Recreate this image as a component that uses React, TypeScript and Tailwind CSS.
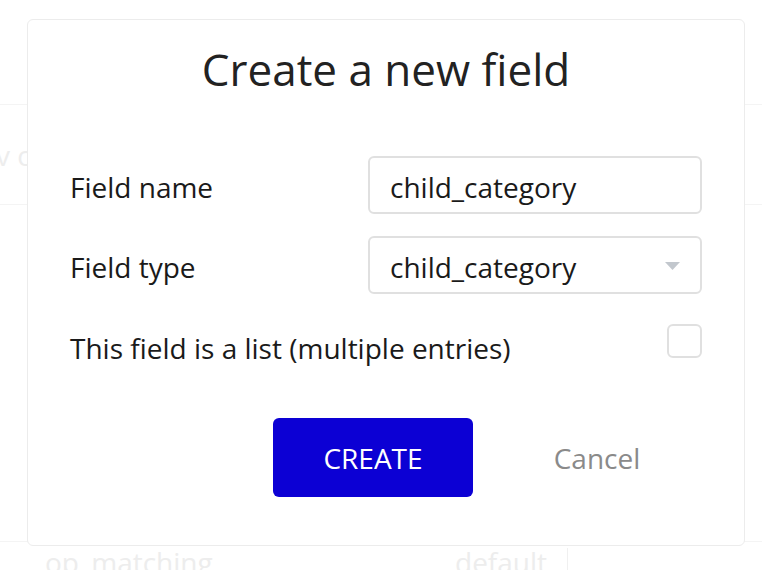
export default function App() {
  const font = { fontFamily: '"Open Sans", "Noto Sans", sans-serif' };

  return (
    <div className="relative h-[570px] w-full overflow-hidden bg-white" style={font}>
      {/* faint page behind the dialog */}
      <div className="flex h-full flex-col text-[#ededed]">
        <div className="h-[105px] border-b border-[#f4f4f4]"></div>
        <div className="flex h-[100px] items-center border-b border-[#f4f4f4] text-[28px]">
          <span className="-ml-[4px]">v c</span>
        </div>
        <div className="flex-1 border-b border-[#f4f4f4]"></div>
        <div className="flex h-[28px] items-start text-[28px] leading-[40px]">
          <span className="ml-[45px] w-[410px]">op_matching</span>
          <span className="w-[112px]">default</span>
          <span className="mt-[6px] h-[30px] border-l border-[#f0f0f0]"></span>
        </div>
      </div>

      {/* dialog */}
      <div className="absolute left-[27px] top-[19px] flex h-[527px] w-[718px] flex-col rounded-md border border-[#ececec] bg-white px-[42px] pt-[19px]">
        <h1 className="text-center text-[44px] leading-[60px] text-[#222]">Create a new field</h1>

        <div className="mt-[57px] flex h-[58px] items-center justify-between">
          <span className="pt-[4px] text-[28px] text-[#1a1a1a]">Field name</span>
          <div className="flex h-[58px] w-[334px] items-center rounded-md border-2 border-[#e0e0e0] px-[20px] pt-[4px] text-[28px] text-[#1a1a1a]">
            child_category
          </div>
        </div>

        <div className="mt-[22px] flex h-[58px] items-center justify-between">
          <span className="pt-[4px] text-[28px] text-[#1a1a1a]">Field type</span>
          <div className="flex h-[58px] w-[334px] items-center justify-between rounded-md border-2 border-[#e0e0e0] pl-[20px] pr-[20px] text-[28px] text-[#1a1a1a]">
            <span className="pt-[4px]">child_category</span>
            <svg width="15" height="8" viewBox="0 0 15 8" className="mt-[2px]">
              <path d="M0 0 L15 0 L7.5 8 Z" fill="#c2c7cd" />
            </svg>
          </div>
        </div>

        <div className="mt-[30px] flex h-[35px] items-start justify-between">
          <span className="mt-[6px] text-[28px] leading-[36px] text-[#1a1a1a]">
            This field is a list (multiple entries)
          </span>
          <div className="h-[34px] w-[35px] rounded-md border-2 border-[#e0e0e0]"></div>
        </div>

        <div className="mt-[59px] flex">
          <button className="ml-[203px] h-[79px] w-[200px] rounded-md bg-[#0c00d4] text-[28px] text-white">
            CREATE
          </button>
          <button className="ml-[24px] h-[79px] w-[200px] text-[28px] text-[#8a8a8a]">Cancel</button>
        </div>
      </div>
    </div>
  );
}
